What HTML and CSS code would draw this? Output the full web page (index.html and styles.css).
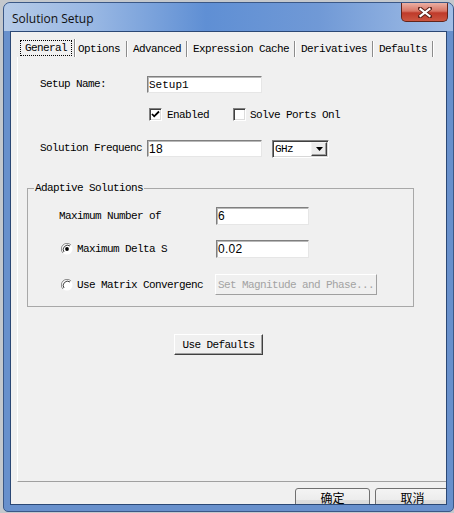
FILE: index.html
```html
<!DOCTYPE html>
<html lang="en">
<head>
    <meta charset="UTF-8">
    <title>Solution Setup</title>
    <link rel="stylesheet" href="styles.css">
</head>
<body>
    <div class="window">
        <div class="titlebar">
            <span class="title">Solution Setup</span>
            <button class="close-btn" title="Close">
                <svg width="14" height="11" viewBox="0 0 14 11">
                    <path d="M2 1.5 L12 9.5 M12 1.5 L2 9.5" stroke="#5b2018" stroke-width="4" stroke-linecap="square"/>
                    <path d="M2.5 2 L11.5 9 M11.5 2 L2.5 9" stroke="#fff" stroke-width="2.2" stroke-linecap="square"/>
                </svg>
            </button>
        </div>

        <div class="client">
            <div class="tabs">
                <div class="tab selected"><span class="focus">General</span></div>
                <div class="tab">Options</div>
                <div class="tab">Advanced</div>
                <div class="tab">Expression Cache</div>
                <div class="tab">Derivatives</div>
                <div class="tab">Defaults</div>
            </div>

            <div class="panel">
                <div class="field-row name-row">
                    <label class="label">Setup Name:</label>
                    <input class="text-input" type="text" value="Setup1">
                </div>

                <div class="check-row">
                    <div class="check-item enabled">
                        <span class="check">
                            <svg width="11" height="11" viewBox="0 0 11 11">
                                <path d="M2 5 L4.2 7.3 L9 2.5" stroke="#000" stroke-width="1.8" fill="none"/>
                            </svg>
                        </span>
                        <span>Enabled</span>
                    </div>
                    <div class="check-item">
                        <span class="check"></span>
                        <span class="ports">Solve Ports Onl</span>
                    </div>
                </div>

                <div class="field-row freq-row">
                    <label class="label freq-label">Solution Frequenc</label>
                    <input class="text-input num" type="text" value="18">
                    <div class="combo">
                        <span>GHz</span>
                        <span class="combo-arrow">
                            <svg width="7" height="4" viewBox="0 0 7 4"><path d="M0 0 H7 L3.5 4 Z" fill="#000"/></svg>
                        </span>
                    </div>
                </div>

                <fieldset class="group">
                    <legend>Adaptive Solutions</legend>
                    <div class="group-row row-a">
                        <span class="group-label">Maximum Number of</span>
                        <input class="small-input num" type="text" value="6">
                    </div>
                    <div class="group-row row-b">
                        <span class="group-label">
                            <svg class="radio" width="12" height="12" viewBox="0 0 12 12">
                                <circle cx="6" cy="6" r="5.5" fill="#fff"/>
                                <path d="M10 2 A5.5 5.5 0 0 0 2 10" stroke="#8a8a8a" fill="none"/>
                                <path d="M9 3 A4.3 4.3 0 0 0 3 9" stroke="#404040" fill="none"/>
                                <circle cx="6" cy="6" r="1.9" fill="#000"/>
                            </svg>
                            <span class="radio-text">Maximum Delta S</span>
                        </span>
                        <input class="small-input num" type="text" value="0.02">
                    </div>
                    <div class="group-row row-c">
                        <span class="group-label">
                            <svg class="radio" width="12" height="12" viewBox="0 0 12 12">
                                <circle cx="6" cy="6" r="5.5" fill="#fff"/>
                                <path d="M10 2 A5.5 5.5 0 0 0 2 10" stroke="#8a8a8a" fill="none"/>
                                <path d="M9 3 A4.3 4.3 0 0 0 3 9" stroke="#404040" fill="none"/>
                            </svg>
                            <span class="radio-text">Use Matrix Convergenc</span>
                        </span>
                        <button class="btn3d phase-btn" disabled>Set Magnitude and Phase...</button>
                    </div>
                </fieldset>

                <button class="btn3d defaults-btn">Use Defaults</button>
            </div>

            <div class="footer">
                <button class="dlg-btn">确定</button>
                <button class="dlg-btn">取消</button>
            </div>
        </div>
    </div>
</body>
</html>
```

FILE: styles.css
```css
body {
    margin: 0;
    background: #c4c8cd;
    font-family: "Liberation Mono", monospace;
    font-size: 11px;
    letter-spacing: -0.6px;
    color: #000;
}
.window {
    box-sizing: border-box;
    width: 451px;
    height: 510px;
    margin: 2px 0 0 3px;
    border: 1px solid #3b5886;
    border-radius: 7px 7px 5px 5px;
    background: #6890cc;
    display: flex;
    flex-direction: column;
    overflow: hidden;
}
.titlebar {
    height: 28px;
    flex: none;
    display: flex;
    align-items: flex-start;
    background: linear-gradient(90deg, #b6cbe8 0%, #98b7e3 20%, #5f8fd4 45%, #7099d6 70%, #a2bee6 100%);
}
.title {
    margin: 8px 0 0 8px;
    font-family: "Open Sans", sans-serif;
    font-size: 12px;
    letter-spacing: 0;
    line-height: 16px;
    color: #101010;
}
.close-btn {
    margin: 0 5px 0 auto;
    width: 47px;
    height: 19px;
    padding: 0;
    border: 1px solid #62241b;
    border-top: none;
    border-radius: 0 0 5px 5px;
    background: linear-gradient(#eab0a4, #d87565 45%, #bf3a2a 55%, #cc5641);
    display: flex;
    align-items: center;
    justify-content: center;
}
.client {
    flex: 1;
    margin: 0 6px 6px;
    border: 1px solid #2b4875;
    background: #f0f0f0;
    overflow: hidden;
}
.tabs {
    display: flex;
    align-items: flex-end;
    height: 19px;
    margin: 6px 0 0 8px;
}
.tab {
    height: 16px;
    line-height: 16px;
    padding: 0 5px 0 6px;
    border-right: 1px solid #8c8c8c;
    box-shadow: 1px 0 0 #fff;
    white-space: nowrap;
}
.tab.selected {
    height: 18px;
    padding: 0 2px 0 1px;
}
.tab.selected + .tab {
    padding: 0 6px 0 3px;
}
.focus {
    display: block;
    margin-top: 1px;
    height: 14px;
    line-height: 14px;
    padding: 0 4px;
    border: 1px dotted #000;
}
.panel {
    display: flow-root;
    box-sizing: border-box;
    height: 425px;
    margin-left: 6px;
    border-left: 1px solid #fff;
    border-bottom: 1px solid #a0a0a0;
}
.field-row {
    display: flex;
    align-items: center;
    margin-left: 22px;
}
.name-row {
    margin-top: 19px;
}
.label {
    width: 107px;
    line-height: 17px;
    white-space: nowrap;
}
.text-input,
.small-input {
    box-sizing: border-box;
    width: 115px;
    height: 17px;
    margin: 0;
    padding: 0 1px;
    border: 1px solid;
    border-color: #7f7f7f #e6e6e6 #e6e6e6 #7f7f7f;
    box-shadow: inset 1px 1px 0 #b8b8b8;
    background: #fff;
    font: inherit;
    color: #000;
    outline: none;
}
.num {
    font-family: "Liberation Sans", sans-serif;
    font-size: 12px;
    letter-spacing: 0.3px;
}
.check-row {
    display: flex;
    margin: 15px 0 0 131px;
    height: 13px;
}
.check-item {
    display: flex;
    align-items: center;
    gap: 5px;
    white-space: nowrap;
}
.check-item.enabled {
    width: 84px;
}
.check {
    box-sizing: border-box;
    width: 13px;
    height: 13px;
    border: 1px solid;
    border-color: #808080 #fff #fff #808080;
    box-shadow: inset 1px 1px 0 #404040, inset -1px -1px 0 #dcdcdc;
    background: #fff;
    display: flex;
}
.ports {
    margin-left: -1px;
}
.freq-row {
    margin-top: 19px;
    align-items: flex-start;
}
.freq-label {
    width: 107px;
}
.combo {
    box-sizing: border-box;
    width: 57px;
    height: 18px;
    margin-left: 10px;
    padding: 0 1px 0 2px;
    display: flex;
    align-items: center;
    justify-content: space-between;
    border: 1px solid;
    border-color: #808080 #fff #fff #808080;
    box-shadow: inset 1px 1px 0 #404040, inset -1px -1px 0 #d8d8d8;
    background: #fff;
}
.combo-arrow {
    box-sizing: border-box;
    width: 16px;
    height: 14px;
    display: flex;
    align-items: center;
    justify-content: center;
    border: 1px solid;
    border-color: #f4f4f4 #404040 #404040 #f4f4f4;
    box-shadow: inset -1px -1px 0 #a0a0a0;
    background: #ececec;
}
.group {
    box-sizing: border-box;
    width: 387px;
    margin: 24px 0 0 9px;
    padding: 0 0 11px 0;
    border: 1px solid #a8a8a8;
    min-inline-size: 0;
}
.group legend {
    margin-left: 6px;
    padding: 0 1px;
    line-height: 12px;
}
.group-row {
    display: flex;
    align-items: center;
    margin-left: 31px;
}
.row-a {
    margin-top: 13px;
}
.row-b {
    margin-top: 15px;
}
.row-c {
    margin-top: 16px;
}
.group-label {
    width: 157px;
    display: flex;
    align-items: center;
    white-space: nowrap;
}
.radio {
    margin: 0 4px 0 2px;
    flex: none;
}
.radio-text {
    width: 130px;
}
.small-input {
    width: 93px;
    height: 18px;
}
.btn3d {
    box-sizing: border-box;
    padding: 0;
    border: 1px solid;
    border-color: #fff #404040 #404040 #fff;
    box-shadow: inset -1px -1px 0 #a0a0a0;
    background: #f0f0f0;
    font: inherit;
    letter-spacing: inherit;
    color: #000;
}
.phase-btn {
    width: 162px;
    height: 21px;
    margin-left: -1px;
    color: #a3a3a3;
    border-color: #fff #a0a0a0 #a0a0a0 #fff;
    box-shadow: none;
    white-space: nowrap;
}
.defaults-btn {
    display: block;
    width: 89px;
    height: 21px;
    margin: 27px 0 0 156px;
}
.footer {
    display: flex;
    gap: 5px;
    margin: 6px 0 0 284px;
}
.dlg-btn {
    flex: none;
    width: 75px;
    height: 24px;
    padding: 0 0 5px;
    border: 1px solid #707070;
    border-radius: 3px;
    background: linear-gradient(#f4f4f4, #ececec 50%, #dedede 50%, #d3d3d3);
    font-family: "Noto Sans CJK SC", sans-serif;
    font-size: 12px;
    letter-spacing: 0;
    line-height: 16px;
    color: #000;
}
```
